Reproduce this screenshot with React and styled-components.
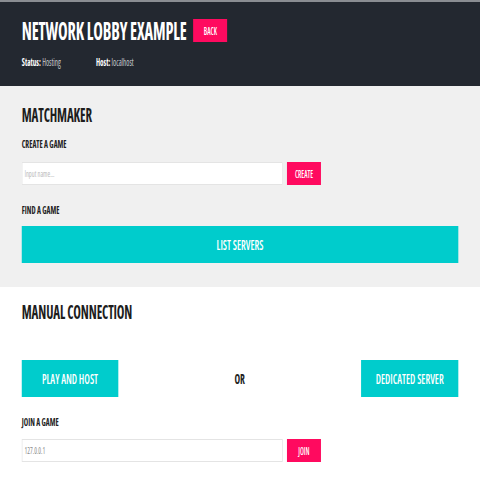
import React from "react";
import styled, { createGlobalStyle } from "styled-components";

// the reference is a wide page squeezed into 480px, so the page is laid out
// wide and squeezed horizontally as a whole
const SQUEEZE = 0.68;

const Global = createGlobalStyle`
  html, body {
    margin: 0;
    padding: 0;
    background: #ffffff;
    overflow: hidden;
  }
  body {
    font-family: "Open Sans", "Liberation Sans", sans-serif;
    font-stretch: 75%;
    color: #222;
  }
`;

const Page = styled.div`
  width: ${Math.round(480 / SQUEEZE)}px;
  transform: scaleX(${SQUEEZE});
  transform-origin: 0 0;
`;

const Header = styled.header`
  background: #232830;
  border-top: 2px solid #8a8d92;
  height: 86px;
  padding: 12px 32px 0;
  box-sizing: border-box;
`;

const TitleRow = styled.div`
  display: flex;
  align-items: center;
  gap: 10px;
  h1 {
    margin: 0;
    font-size: 24px;
    font-weight: 700;
    color: #ffffff;
    letter-spacing: -0.2px;
  }
`;

const SmallButton = styled.button`
  background: #ff0a5f;
  color: #fff;
  border: none;
  font-family: inherit;
  font-stretch: 75%;
  font-size: 10px;
  font-weight: 600;
  text-transform: uppercase;
  width: 50px;
  height: 23px;
  padding: 0;
`;

const StatusRow = styled.div`
  display: flex;
  margin-top: 8px;
  font-size: 10.5px;
  color: #c8cbd0;
  span {
    width: 109px;
  }
  b {
    color: #ffffff;
    font-weight: 700;
  }
`;

const Section = styled.section`
  background: ${(p) => p.$bg};
  padding: ${(p) => p.$pad};
`;

const SectionTitle = styled.h2`
  margin: 0;
  font-size: 19px;
  font-weight: 700;
  color: #1d1d1d;
  letter-spacing: -0.2px;
`;

const Label = styled.h3`
  margin: ${(p) => p.$m};
  font-size: 11px;
  font-weight: 700;
  color: #222;
`;

const InputRow = styled.div`
  display: flex;
  align-items: center;
  gap: 6px;
`;

const TextInput = styled.input`
  width: 384px;
  height: 23px;
  box-sizing: border-box;
  border: 1px solid #e4e4e4;
  background: #fff;
  padding: 0 3px;
  font-family: inherit;
  font-stretch: 75%;
  font-size: 9.5px;
  color: #8a8a8a;
  outline: none;
  &::placeholder {
    color: #b8b8b8;
  }
`;

const BigButton = styled.button`
  background: #00cccc;
  color: #fff;
  border: none;
  font-family: inherit;
  font-stretch: 75%;
  font-size: 14.5px;
  font-weight: 600;
  text-transform: uppercase;
  height: 37px;
  width: ${(p) => p.$w || "100%"};
  padding: 0;
`;

const ChoiceRow = styled.div`
  display: flex;
  align-items: center;
  justify-content: space-between;
  margin-top: 35px;
  span {
    font-size: 14px;
    font-weight: 700;
    color: #222;
  }
`;

export default function App() {
  return (
    <>
      <Global />
      <Page>
        <Header>
          <TitleRow>
            <h1>NETWORK LOBBY EXAMPLE</h1>
            <SmallButton>Back</SmallButton>
          </TitleRow>
          <StatusRow>
            <span>
              <b>Status:</b> Hosting
            </span>
            <span>
              <b>Host:</b> localhost
            </span>
          </StatusRow>
        </Header>
        <Section $bg="#f0f0f0" $pad="16px 32px 24px">
          <SectionTitle>MATCHMAKER</SectionTitle>
          <Label $m="8px 0 11px">CREATE A GAME</Label>
          <InputRow>
            <TextInput placeholder="Input name..." />
            <SmallButton>Create</SmallButton>
          </InputRow>
          <Label $m="17px 0 9px">FIND A GAME</Label>
          <BigButton>List servers</BigButton>
        </Section>
        <Section $bg="#ffffff" $pad="12px 32px 20px">
          <SectionTitle>MANUAL CONNECTION</SectionTitle>
          <ChoiceRow>
            <BigButton $w="142px">Play and host</BigButton>
            <span>OR</span>
            <BigButton $w="143px">Dedicated server</BigButton>
          </ChoiceRow>
          <Label $m="17px 0 10px">JOIN A GAME</Label>
          <InputRow>
            <TextInput defaultValue="127.0.0.1" />
            <SmallButton>Join</SmallButton>
          </InputRow>
        </Section>
      </Page>
    </>
  );
}
